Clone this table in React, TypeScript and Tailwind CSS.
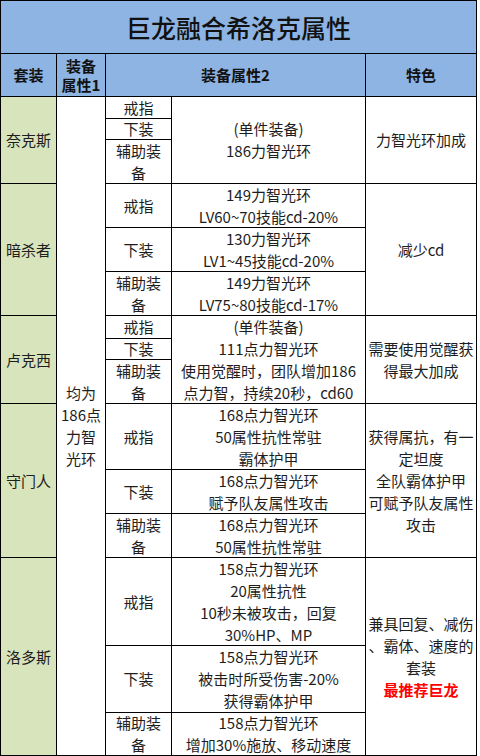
import React from 'react';

const base = 'flex flex-col items-center justify-center text-center whitespace-nowrap';
const cell = `${base} bg-white`;
const green = `${base} bg-[#d8e4bc]`;
const blue = `${base} bg-[#8db4e2] font-bold text-[#111]`;

function Lines({ lines }: { lines: string[] }) {
  return (
    <>
      {lines.map((l, i) => (
        <div key={i}>{l}</div>
      ))}
    </>
  );
}

export default function App() {
  return (
    <div
      className="bg-white w-[480px] h-[756px] overflow-hidden text-[15px] leading-[22px] text-[#1e1e1e]"
      style={{ fontFamily: '"Noto Sans CJK SC", "Noto Sans", sans-serif' }}
    >
      <div className="w-[477px] grid gap-px bg-black border border-black grid-cols-[55px_48px_65px_193px_110px] grid-rows-[52px_42px_21px_20px_43px_43px_43px_43px_22px_20px_43px_65px_43px_43px_87px_66px_42px]">
        <div className={`${base} bg-[#8db4e2] col-span-5 text-[25px] font-medium text-[#111]`}>巨龙融合希洛克属性</div>

        <div className={blue}>套装</div>
        <div className={`${blue} leading-[19px]`}>
          <Lines lines={['装备', '属性1']} />
        </div>
        <div className={`${blue} col-span-2`}>装备属性2</div>
        <div className={blue}>特色</div>

        {/* 奈克斯 */}
        <div className={`${green} row-span-3`}>奈克斯</div>
        <div className={`${cell} row-span-15`}>
          <Lines lines={['均为', '186点', '力智', '光环']} />
        </div>
        <div className={cell}>戒指</div>
        <div className={`${cell} row-span-3`}>
          <Lines lines={['(单件装备)', '186力智光环']} />
        </div>
        <div className={`${cell} row-span-3`}>力智光环加成</div>
        <div className={cell}>下装</div>
        <div className={cell}>
          <Lines lines={['辅助装', '备']} />
        </div>

        {/* 暗杀者 */}
        <div className={`${green} row-span-3`}>暗杀者</div>
        <div className={cell}>戒指</div>
        <div className={cell}>
          <Lines lines={['149力智光环', 'LV60~70技能cd-20%']} />
        </div>
        <div className={`${cell} row-span-3`}>减少cd</div>
        <div className={cell}>下装</div>
        <div className={cell}>
          <Lines lines={['130力智光环', 'LV1~45技能cd-20%']} />
        </div>
        <div className={cell}>
          <Lines lines={['辅助装', '备']} />
        </div>
        <div className={cell}>
          <Lines lines={['149力智光环', 'LV75~80技能cd-17%']} />
        </div>

        {/* 卢克西 */}
        <div className={`${green} row-span-3`}>卢克西</div>
        <div className={cell}>戒指</div>
        <div className={`${cell} row-span-3`}>
          <Lines lines={['(单件装备)', '111点力智光环', '使用觉醒时，团队增加186', '点力智，持续20秒，cd60']} />
        </div>
        <div className={`${cell} row-span-3`}>
          <Lines lines={['需要使用觉醒获', '得最大加成']} />
        </div>
        <div className={cell}>下装</div>
        <div className={cell}>
          <Lines lines={['辅助装', '备']} />
        </div>

        {/* 守门人 */}
        <div className={`${green} row-span-3`}>守门人</div>
        <div className={cell}>戒指</div>
        <div className={cell}>
          <Lines lines={['168点力智光环', '50属性抗性常驻', '霸体护甲']} />
        </div>
        <div className={`${cell} row-span-3`}>
          <Lines lines={['获得属抗，有一', '定坦度', '全队霸体护甲', '可赋予队友属性', '攻击']} />
        </div>
        <div className={cell}>下装</div>
        <div className={cell}>
          <Lines lines={['168点力智光环', '赋予队友属性攻击']} />
        </div>
        <div className={cell}>
          <Lines lines={['辅助装', '备']} />
        </div>
        <div className={cell}>
          <Lines lines={['168点力智光环', '50属性抗性常驻']} />
        </div>

        {/* 洛多斯 */}
        <div className={`${green} row-span-3`}>洛多斯</div>
        <div className={cell}>戒指</div>
        <div className={cell}>
          <Lines lines={['158点力智光环', '20属性抗性', '10秒未被攻击，回复', '30%HP、MP']} />
        </div>
        <div className={`${cell} row-span-3`}>
          <Lines lines={['兼具回复、减伤', '、霸体、速度的', '套装']} />
          <div className="text-[#ff0000] font-bold">最推荐巨龙</div>
        </div>
        <div className={cell}>下装</div>
        <div className={cell}>
          <Lines lines={['158点力智光环', '被击时所受伤害-20%', '获得霸体护甲']} />
        </div>
        <div className={cell}>
          <Lines lines={['辅助装', '备']} />
        </div>
        <div className={cell}>
          <Lines lines={['158点力智光环', '增加30%施放、移动速度']} />
        </div>
      </div>
    </div>
  );
}
